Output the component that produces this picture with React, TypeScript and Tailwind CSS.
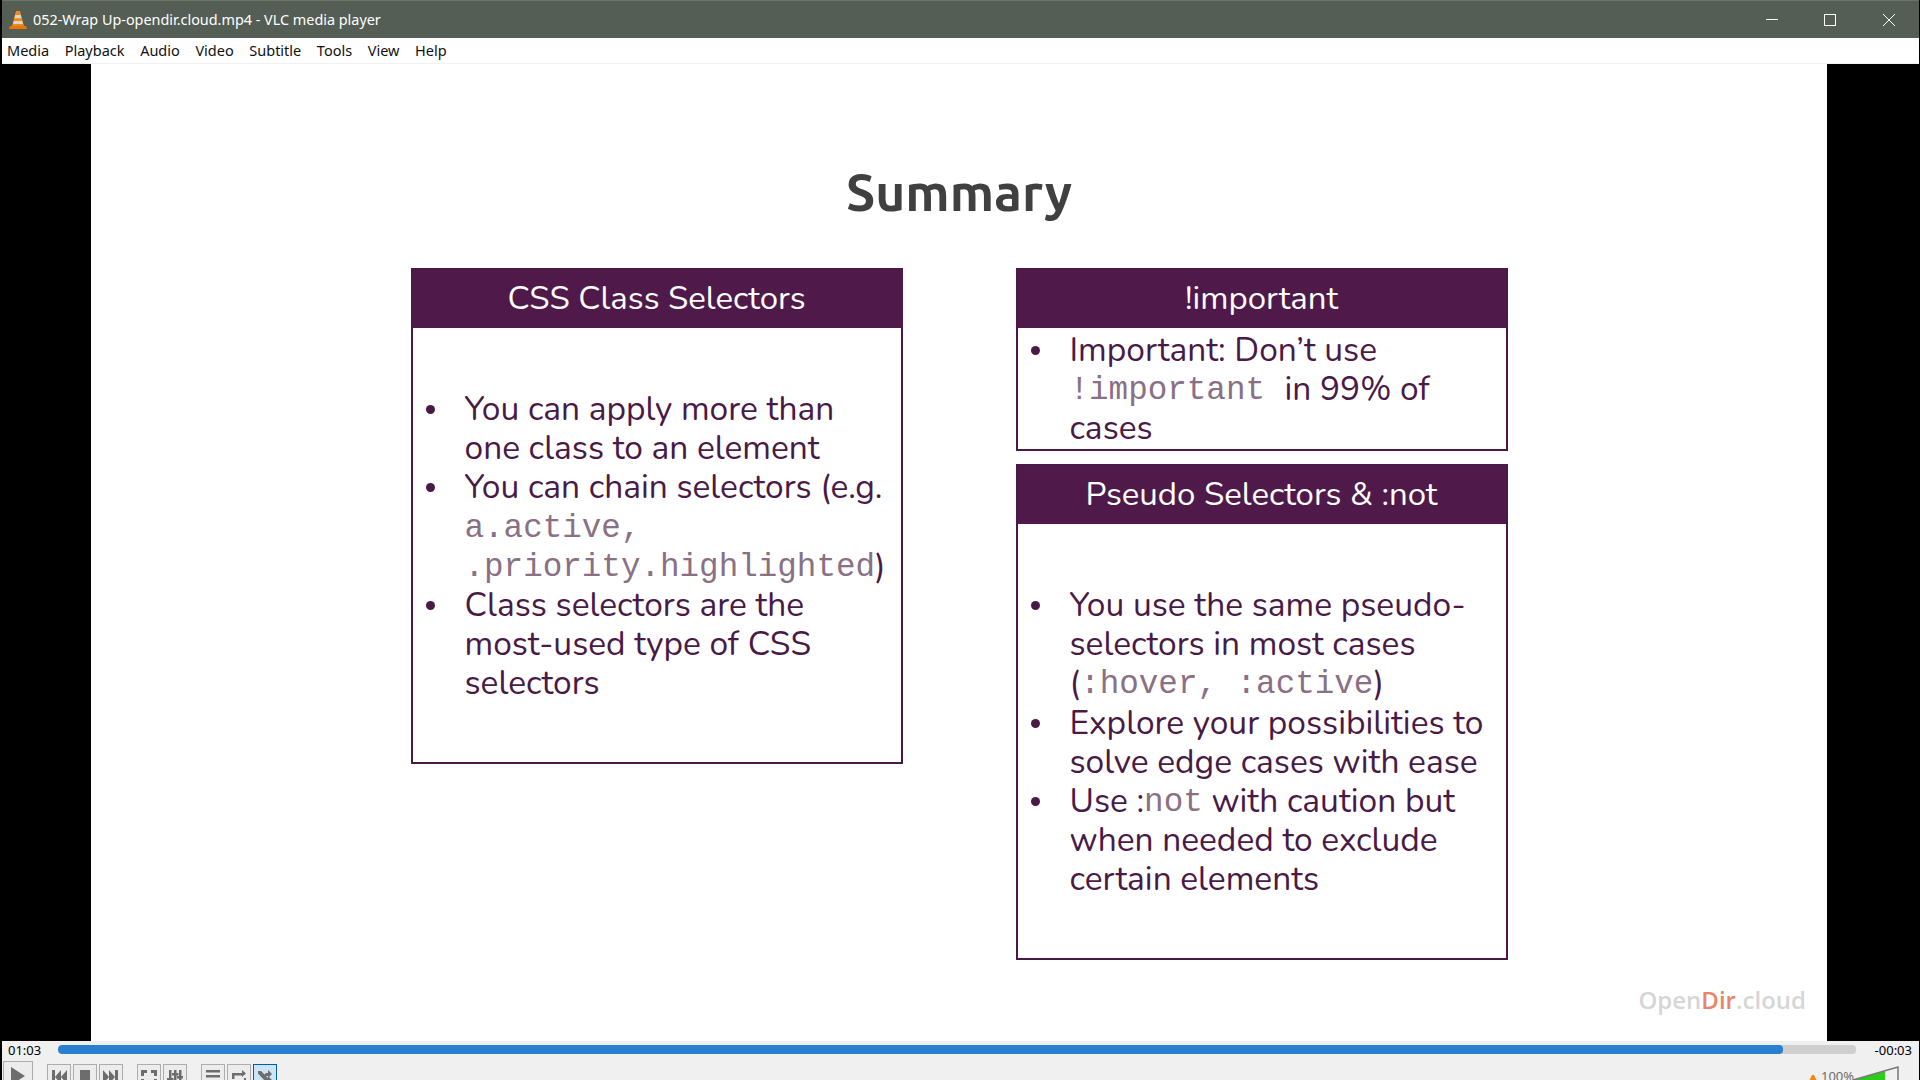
import type { ReactNode } from 'react';

const menuItems = ['Media', 'Playback', 'Audio', 'Video', 'Subtitle', 'Tools', 'View', 'Help'];

function Code({ children }: { children: ReactNode }) {
  return <span className="align-[1.5px] font-['Liberation_Mono',monospace] text-[32.6px] leading-none text-[#8a7085]">{children}</span>;
}

// one box of the slide: purple header and a bulleted body
function Panel({ title, items, className, bodyClass }: { title: string; items: ReactNode[]; className: string; bodyClass: string }) {
  return (
    <div className={`flex w-[492px] flex-col border-2 border-[#4a1a47] bg-white ${className}`}>
      <div className="flex h-[58px] shrink-0 items-center justify-center bg-[#4f1a4a] text-[33px] text-white">
        {title}
      </div>
      <ul className={`flex flex-col ${bodyClass}`}>
        {items.map((item, i) => (
          <li key={i} className="flex text-[33.5px] leading-[39.2px] text-[#4a1a47]">
            <span className="w-[52px] shrink-0 pl-[13px] pt-[15px]">
              <span className="block h-[9px] w-[9px] rounded-full bg-[#4a1a47]" />
            </span>
            <span className="whitespace-nowrap">{item}</span>
          </li>
        ))}
      </ul>
    </div>
  );
}

function VlcCone() {
  return (
    <svg width="18" height="20" viewBox="0 0 18 20">
      <path d="M1 16h16l1 3H0z" fill="#e8760c" />
      <path d="M7 1h4l4 15H3z" fill="#f28a10" />
      <path d="M6.3 5h5.4l.8 3.2H5.5zM4.8 11h8.4l.8 3H4z" fill="#d9d6cf" />
    </svg>
  );
}

function CtrlButton({ children, active, className }: { children: ReactNode; active?: boolean; className?: string }) {
  return (
    <div
      className={`flex shrink-0 items-start justify-center border ${
        active ? 'border-[#005fa8] bg-[#cce4f7]' : 'border-[#adadad] bg-[#ececec]'
      } ${className ?? 'h-[24px] w-[24px] pt-[5px]'}`}
    >
      {children}
    </div>
  );
}

function Glyph({ d }: { d: string }) {
  return (
    <svg width="16" height="16" viewBox="0 0 16 16" fill="#6d6d6d">
      <path d={d} />
    </svg>
  );
}

export default function App() {
  return (
    <div className="flex h-[1080px] w-[1920px] flex-col overflow-hidden border-l-2 border-r border-black bg-white font-['Open_Sans',sans-serif]">
      {/* title bar */}
      <div className="flex h-[38px] shrink-0 items-center border-t border-[#6a736a] bg-[#545e54] pl-[7px] text-[14.4px] text-white">
        <VlcCone />
        <span className="ml-[6px] font-['Noto_Sans',sans-serif]">052-Wrap Up-opendir.cloud.mp4 - VLC media player</span>
        <div className="ml-auto flex items-center">
          <div className="mr-[46px] h-px w-[12px] bg-white" />
          <div className="mr-[47px] h-[12px] w-[12px] border border-white" />
          <svg className="mr-[24px]" width="12" height="12" viewBox="0 0 12 12" stroke="white" fill="none">
            <path d="M0 0l12 12M12 0L0 12" />
          </svg>
        </div>
      </div>

      {/* menu */}
      <div className="flex h-[26px] shrink-0 items-center gap-[15.6px] border-b border-[#f0f0f0] bg-white pl-[5px] font-['Noto_Sans',sans-serif] text-[14.5px] text-[#111]">
        {menuItems.map((m) => (
          <span key={m}>{m}</span>
        ))}
      </div>

      {/* video */}
      <div className="flex h-[977px] shrink-0 bg-black pl-[89px]">
        <div className="relative flex w-[1736px] flex-col items-center bg-white">
          <h1 className="mt-[92px] font-['Ubuntu','Noto_Sans',sans-serif] text-[51.5px] leading-[72px] font-bold text-[#404040]">
            Summary
          </h1>
          <div className="mt-[40px] flex w-[1097px] justify-between font-['Nunito','Noto_Sans',sans-serif]">
            <Panel
              title="CSS Class Selectors"
              className="h-[496px]"
              bodyClass="pt-[62px]"
              items={[
                <>You can apply more than<br />one class to an element</>,
                <>You can chain selectors (e.g.<br /><Code>a.active,</Code><br /><Code>.priority.highlighted</Code>)</>,
                <>Class selectors are the<br />most-used type of CSS<br />selectors</>,
              ]}
            />
            <div className="flex flex-col gap-[13px]">
              <Panel
                title="!important"
                className="h-[183px]"
                bodyClass="pt-[3px]"
                items={[<>Important: Don’t use<br /><Code>!important </Code>in 99% of<br />cases</>]}
              />
              <Panel
                title="Pseudo Selectors & :not"
                className="h-[496px]"
                bodyClass="pt-[62px]"
                items={[
                  <>You use the same pseudo-<br />selectors in most cases<br />(<Code>:hover, :active</Code>)</>,
                  <>Explore your possibilities to<br />solve edge cases with ease</>,
                  <>Use :<Code>not</Code> with caution but<br />when needed to exclude<br />certain elements</>,
                ]}
              />
            </div>
          </div>
          <div className="absolute right-[21px] bottom-[23px] text-[24px] font-semibold text-[#d6d6d6]">
            Open<span className="text-[#e8846a]">Dir</span>.cloud
          </div>
        </div>
      </div>

      {/* seek bar */}
      <div className="flex h-[39px] shrink-0 flex-col bg-[#f0f0f0] font-['Noto_Sans',sans-serif]">
        <div className="flex h-[20px] shrink-0 items-center pl-[6px] pr-[7px] text-[13px] text-black">
          <span className="w-[50px]">01:03</span>
          <div className="mb-[3px] h-[9px] w-[1798px] overflow-hidden rounded-[4px] bg-[#cfcfcf]">
            <div className="h-full w-[1725px] rounded-[4px] bg-[#2a7fd0]" />
          </div>
          <span className="ml-auto">-00:03</span>
        </div>
        <div className="flex items-start pl-[1px]">
          <CtrlButton className="h-[30px] w-[30px] pt-[5px]">
            <svg width="14" height="18" viewBox="0 0 14 18" fill="#6d6d6d"><path d="M0 0l14 9L0 18z" /></svg>
          </CtrlButton>
          <div className="mt-[3px] ml-[14px] flex gap-[2px]">
            <CtrlButton><Glyph d="M1 0h3v14H1zM10 0v14L4 7zM16 0v14L10 7z" /></CtrlButton>
            <CtrlButton><Glyph d="M3 0h10v14H3z" /></CtrlButton>
            <CtrlButton><Glyph d="M0 0l6 7-6 7zM6 0l6 7-6 7zM12 0h3v14h-3z" /></CtrlButton>
          </div>
          <div className="mt-[3px] ml-[14px] flex gap-[2px]">
            <CtrlButton><Glyph d="M0 0h6v3H3v3H0zM10 0h6v6h-3V3h-3zM0 9h3v3h3v3H0zM13 9h3v6h-6v-3h3z" /></CtrlButton>
            <CtrlButton><Glyph d="M2 0h2.5v14H2zM7 0h2.5v14H7zM12 0h2.5v14H12zM0 8h6.5v2.5H0zM5 3h6.5v2.5H5zM10 6h6v2.5h-6z" /></CtrlButton>
          </div>
          <div className="mt-[3px] ml-[14px] flex gap-[2px]">
            <CtrlButton><Glyph d="M1 0h14v2.500H1zM1 5h14v2.500H1zM1 10h14v2.500H1z" /></CtrlButton>
            <CtrlButton><Glyph d="M1 3h10V0l4 3.500L11 7V5.500H3.500V9H1zM1 11h12V8h2v5.500H1z" /></CtrlButton>
            <CtrlButton active><Glyph d="M1 1h3l7 7V6l4 4-4 4v-3H8L1 3.500zM11 0l4 4-4 4V6H9L7.500 4.500 9 3h2z" /></CtrlButton>
          </div>
          <div className="relative ml-auto mr-[20px] mt-[5px] flex h-[20px] w-[90px] items-start">
            <svg className="mt-[9px]" width="8" height="6" viewBox="0 0 8 6"><path d="M3 0h2l3 6H0z" fill="#f28a10" /></svg>
            <span className="ml-[4px] mt-[3px] text-[13px] leading-[14px] text-[#6d6d6d]">100%</span>
            <svg className="absolute right-0 top-0" width="47" height="14" viewBox="0 0 47 14">
              <path d="M1 14L33 5v9z" fill="#2ecc1a" />
              <path d="M1 14L46 1v13" fill="none" stroke="#777" strokeWidth="1.500" />
            </svg>
          </div>
        </div>
      </div>
    </div>
  );
}
